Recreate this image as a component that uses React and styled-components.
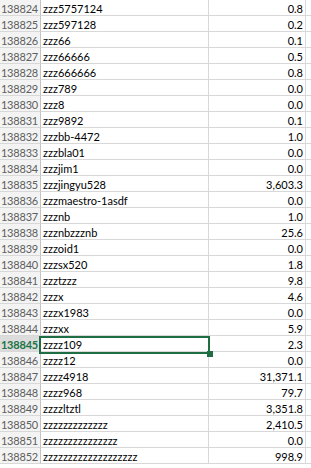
import React from 'react';
import styled, { createGlobalStyle } from 'styled-components';

const GlobalStyle = createGlobalStyle`
  html, body {
    margin: 0;
    padding: 0;
    background: #ffffff;
    overflow: hidden;
  }
`;

const Sheet = styled.div`
  width: 311px;
  height: 468px;
  overflow: hidden;
  font-family: Lato, "Liberation Sans", sans-serif;
  font-size: 11px;
  color: #000;
`;

const Row = styled.div`
  display: flex;
  height: 16px;
`;

const Cell = styled.div`
  box-sizing: border-box;
  height: 16px;
  padding-top: 3px;
  line-height: 12px;
  border-bottom: 1px solid #d8d8d8;
  border-right: 1px solid #d8d8d8;
  white-space: nowrap;
  position: relative;
`;

const RowHeader = styled(Cell)`
  width: 41px;
  flex: none;
  text-align: right;
  padding-right: 2px;
  background: ${p => (p.active ? '#dcdcdc' : '#f3f3f3')};
  color: ${p => (p.active ? '#217346' : '#5e5e5e')};
  font-weight: ${p => (p.active ? 700 : 400)};
  letter-spacing: -0.2px;
  border-right-color: #c4c4c4;
`;

const NameCell = styled(Cell)`
  width: 168px;
  flex: none;
  padding-left: 2px;
`;

const ValueCell = styled(Cell)`
  width: 97px;
  flex: none;
  text-align: right;
  padding-right: 2px;
`;

const EmptyCell = styled(Cell)`
  flex: 1;
  border-right: none;
`;

const Selection = styled.div`
  position: absolute;
  z-index: 2;
  top: 0;
  bottom: -3px;
  left: -2px;
  right: -2px;
  border: 2px solid #1f6e43;
  pointer-events: none;
`;

const FillHandle = styled.div`
  position: absolute;
  right: -5px;
  bottom: -5px;
  width: 6px;
  height: 6px;
  background: #1f6e43;
`;

const rows = [
  ['138824', 'zzz5757124', '0.8'],
  ['138825', 'zzz597128', '0.2'],
  ['138826', 'zzz66', '0.1'],
  ['138827', 'zzz66666', '0.5'],
  ['138828', 'zzz666666', '0.8'],
  ['138829', 'zzz789', '0.0'],
  ['138830', 'zzz8', '0.0'],
  ['138831', 'zzz9892', '0.1'],
  ['138832', 'zzzbb-4472', '1.0'],
  ['138833', 'zzzbla01', '0.0'],
  ['138834', 'zzzjim1', '0.0'],
  ['138835', 'zzzjingyu528', '3,603.3'],
  ['138836', 'zzzmaestro-1asdf', '0.0'],
  ['138837', 'zzznb', '1.0'],
  ['138838', 'zzznbzzznb', '25.6'],
  ['138839', 'zzzoid1', '0.0'],
  ['138840', 'zzzsx520', '1.8'],
  ['138841', 'zzztzzz', '9.8'],
  ['138842', 'zzzx', '4.6'],
  ['138843', 'zzzx1983', '0.0'],
  ['138844', 'zzzxx', '5.9'],
  ['138845', 'zzzz109', '2.3'],
  ['138846', 'zzzz12', '0.0'],
  ['138847', 'zzzz4918', '31,371.1'],
  ['138848', 'zzzz968', '79.7'],
  ['138849', 'zzzzltztl', '3,351.8'],
  ['138850', 'zzzzzzzzzzzzz', '2,410.5'],
  ['138851', 'zzzzzzzzzzzzzzz', '0.0'],
  ['138852', 'zzzzzzzzzzzzzzzzzzz', '998.9'],
];

const ACTIVE = '138845';

export default function App() {
  return (
    <>
      <GlobalStyle />
      <Sheet>
        {rows.map(([num, name, value]) => {
          const active = num === ACTIVE;
          return (
            <Row key={num}>
              <RowHeader active={active}>{num}</RowHeader>
              <NameCell>
                {name}
                {active && (
                  <Selection>
                    <FillHandle />
                  </Selection>
                )}
              </NameCell>
              <ValueCell>{value}</ValueCell>
              <EmptyCell />
            </Row>
          );
        })}
      </Sheet>
    </>
  );
}
